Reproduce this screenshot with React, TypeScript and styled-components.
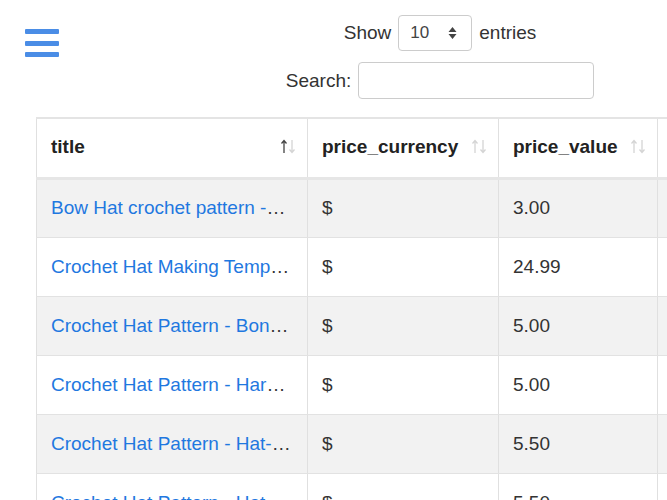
import React from "react";
import styled, { createGlobalStyle } from "styled-components";

const Global = createGlobalStyle`
  html, body { margin: 0; padding: 0; background: #fff; }
  body { font-family: "Liberation Sans", Arial, sans-serif; color: #333; overflow: hidden; width: 667px; }
`;

const Page = styled.div`
  width: 667px;
  overflow: hidden;
`;

const Header = styled.div`
  display: flex;
  align-items: flex-start;
  height: 117px;
`;

const Burger = styled.button`
  display: flex;
  flex-direction: column;
  gap: 6.5px;
  margin: 29px 0 0 25px;
  padding: 0;
  border: 0;
  background: none;
  width: 34px;
`;

const Bar = styled.span`
  display: block;
  height: 5px;
  width: 34px;
  border-radius: 1px;
  background: #4a8de6;
`;

const Controls = styled.div`
  flex: 1;
  margin-left: 154px;
  display: flex;
  flex-direction: column;
  align-items: center;
  gap: 11px;
  padding-top: 15px;
  font-size: 19px;
  color: #333;
`;

const ControlRow = styled.label`
  display: flex;
  align-items: center;
  gap: 7px;
`;

const Select = styled.div`
  width: 74px;
  height: 36px;
  box-sizing: border-box;
  border: 1px solid #ccc;
  border-radius: 4px;
  display: flex;
  align-items: center;
  justify-content: space-between;
  padding: 0 14px 0 11px;
  font-size: 17px;
  color: #444;
`;

const Input = styled.div`
  width: 236px;
  height: 37px;
  box-sizing: border-box;
  border: 1px solid #ccc;
  border-radius: 4px;
`;

const Table = styled.table`
  margin-left: 36px;
  border-collapse: collapse;
  table-layout: fixed;
  width: 780px;
  font-size: 19px;
  border-top: 2px solid #e4e4e4;
  border-left: 1px solid #e0e0e0;
`;

const Th = styled.th<{ $w: number }>`
  width: ${(p) => p.$w}px;
  height: 60px;
  padding: 0 11px 2px 14px;
  text-align: left;
  font-weight: bold;
  color: #222;
  border-right: 1px solid #e0e0e0;
  border-bottom: 3px solid #e6e6e6;
  box-sizing: border-box;
`;

const ThInner = styled.div`
  display: flex;
  align-items: center;
  justify-content: space-between;
  gap: 8px;
  white-space: nowrap;
`;

const Tr = styled.tr<{ $odd: boolean }>`
  background: ${(p) => (p.$odd ? "#f2f2f2" : "#fff")};
`;

const Td = styled.td`
  height: 59px;
  padding: 0 15px 0 14px;
  border-right: 1px solid #e0e0e0;
  border-bottom: 1px solid #e2e2e2;
  white-space: nowrap;
  overflow: hidden;
  text-overflow: ellipsis;
  color: #333;
  box-sizing: border-box;
`;

const Link = styled.a`
  color: #1f78e0;
  text-decoration: none;
`;

function SortIcon({ on }: { on: boolean }) {
  const up = on ? "#444" : "#d4d4d4";
  const down = "#d4d4d4";
  return (
    <svg width="16" height="15" viewBox="0 0 16 15" style={{ flex: "none" }}>
      <path d="M4 1.5 V14 M1.5 4.5 L4 1.5 L6.5 4.5" stroke={up} strokeWidth="1.3" fill="none" />
      <path d="M12 1 V13.5 M9.5 10.5 L12 13.5 L14.5 10.5" stroke={down} strokeWidth="1.3" fill="none" />
    </svg>
  );
}

const rows = [
  ["Bow Hat crochet pattern -Baby to Adult", "$", "3.00"],
  ["Crochet Hat Making Template Guide", "$", "24.99"],
  ["Crochet Hat Pattern - Bonnet Style", "$", "5.00"],
  ["Crochet Hat Pattern - Harper Slouch", "$", "5.00"],
  ["Crochet Hat Pattern - Hat-Scarf Set", "$", "5.50"],
  ["Crochet Hat Pattern - Hat-Slouchy Beret", "$", "5.50"],
];

const cols: [string, number, boolean][] = [
  ["title", 271, true],
  ["price_currency", 191, false],
  ["price_value", 159, false],
  ["url", 159, false],
];

export default function App() {
  return (
    <Page>
      <Global />
      <Header>
        <Burger aria-label="menu">
          <Bar />
          <Bar />
          <Bar />
        </Burger>
        <Controls>
          <ControlRow>
            Show
            <Select>
              <span>10</span>
              <svg width="9" height="14" viewBox="0 0 9 14">
                <path d="M4.5 1 L8.5 6 H0.5 Z M4.5 13 L8.5 8 H0.5 Z" fill="#444" />
              </svg>
            </Select>
            entries
          </ControlRow>
          <ControlRow>
            Search:
            <Input />
          </ControlRow>
        </Controls>
      </Header>
      <Table>
        <thead>
          <tr>
            {cols.map(([name, w, on]) => (
              <Th key={name} $w={w}>
                <ThInner>
                  <span>{name}</span>
                  <SortIcon on={on} />
                </ThInner>
              </Th>
            ))}
          </tr>
        </thead>
        <tbody>
          {rows.map((r, i) => (
            <Tr key={i} $odd={i % 2 === 0}>
              <Td>
                <Link href="#">{r[0]}</Link>
              </Td>
              <Td>{r[1]}</Td>
              <Td>{r[2]}</Td>
              <Td></Td>
            </Tr>
          ))}
        </tbody>
      </Table>
    </Page>
  );
}
